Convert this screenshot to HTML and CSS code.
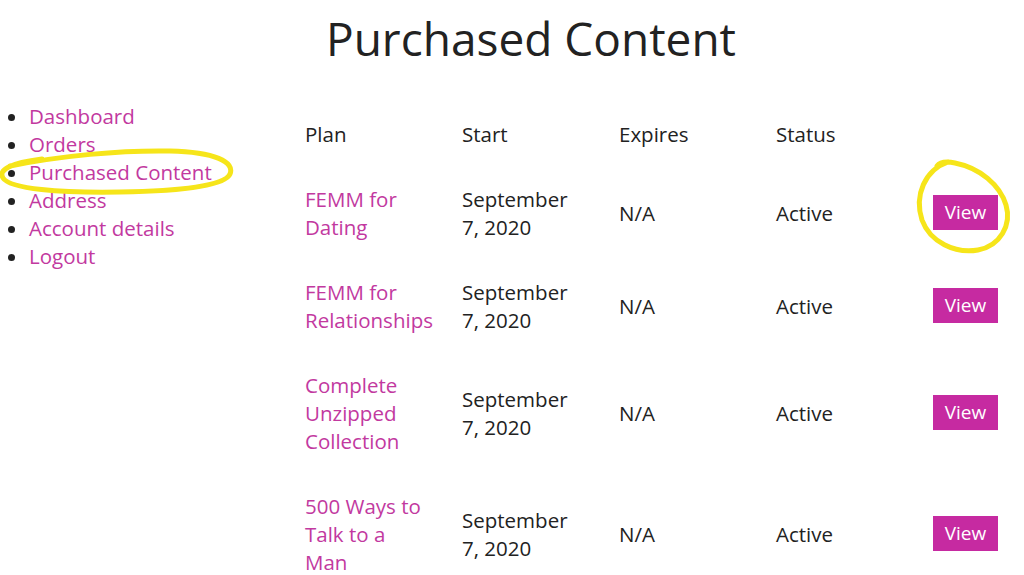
FILE: index.html
```html
<!DOCTYPE html>
<html lang="en">

<head>
    <meta charset="UTF-8">
    <meta name="viewport" content="width=device-width, initial-scale=1.0">
    <title>Purchased Content</title>
    <link rel="stylesheet" href="styles.css">
</head>

<body>
    <h1 class="page-title">Purchased Content</h1>

    <div class="account">
        <nav class="account-nav">
            <ul>
                <li><a href="#">Dashboard</a></li>
                <li><a href="#">Orders</a></li>
                <li><a href="#">Purchased Content</a></li>
                <li><a href="#">Address</a></li>
                <li><a href="#">Account details</a></li>
                <li><a href="#">Logout</a></li>
            </ul>
        </nav>

        <table class="plans">
            <thead>
                <tr>
                    <th>Plan</th>
                    <th>Start</th>
                    <th>Expires</th>
                    <th>Status</th>
                    <th></th>
                </tr>
            </thead>
            <tbody>
                <tr>
                    <td><a href="#">FEMM for Dating</a></td>
                    <td>September 7,&nbsp;2020</td>
                    <td>N/A</td>
                    <td>Active</td>
                    <td><a class="btn" href="#">View</a></td>
                </tr>
                <tr>
                    <td><a href="#">FEMM for Relationships</a></td>
                    <td>September 7,&nbsp;2020</td>
                    <td>N/A</td>
                    <td>Active</td>
                    <td><a class="btn" href="#">View</a></td>
                </tr>
                <tr>
                    <td><a href="#">Complete Unzipped Collection</a></td>
                    <td>September 7,&nbsp;2020</td>
                    <td>N/A</td>
                    <td>Active</td>
                    <td><a class="btn" href="#">View</a></td>
                </tr>
                <tr>
                    <td><a href="#">500 Ways to Talk to a<br>Man</a></td>
                    <td>September 7,&nbsp;2020</td>
                    <td>N/A</td>
                    <td>Active</td>
                    <td><a class="btn" href="#">View</a></td>
                </tr>
            </tbody>
        </table>
    </div>

    <!-- hand drawn highlights -->
    <svg class="marks" width="1024" height="575" viewBox="0 0 1024 575">
        <path d="M10 166 C60 156 120 150 170 151 C215 152 235 162 230 174 C225 186 180 191 120 192 C60 193 10 189 3 178 C-2 170 10 163 42 159" />
        <path d="M948 162 C925 170 914 195 922 220 C930 242 955 254 978 250 C1000 246 1012 225 1006 205 C1000 185 980 168 955 163 C945 161 940 162 937 166" />
    </svg>
</body>

</html>
```

FILE: styles.css
```css
body {
    font-family: "Open Sans", Arial, sans-serif;
    font-size: 20.5px;
    line-height: 28px;
    color: #222;
    background: #fff;
    margin: 0;
    position: relative;
    height: 575px;
    overflow: hidden;
}

a {
    color: #c2399f;
    text-decoration: none;
}

.page-title {
    margin: 0;
    padding: 10px 0 0 38px;
    height: 102px;
    box-sizing: border-box;
    text-align: center;
    font-size: 46px;
    line-height: 56px;
    font-weight: 400;
    color: #222;
}

.account {
    display: flex;
}

.account-nav {
    width: 305px;
    flex-shrink: 0;
}

.account-nav ul {
    margin: 0;
    padding: 0 0 0 29px;
}

.plans {
    border-collapse: collapse;
    margin-top: -1px;
}

.plans th,
.plans td {
    width: 129px;
    padding: 18.5px 28px 18.5px 0;
    text-align: left;
    vertical-align: middle;
}

.plans th {
    font-weight: 500;
}

.plans td:last-child,
.plans th:last-child {
    width: 65px;
    padding-right: 0;
}

.btn {
    display: inline-block;
    background: #c62aa1;
    color: #fff;
    font-size: 19px;
    padding: 3px 0 4px;
    width: 65px;
    text-align: center;
    vertical-align: middle;
}

.marks {
    position: absolute;
    top: 0;
    left: 0;
    pointer-events: none;
}

.marks path {
    fill: none;
    stroke: #f6e51a;
    stroke-width: 5;
    stroke-linecap: round;
}
```
